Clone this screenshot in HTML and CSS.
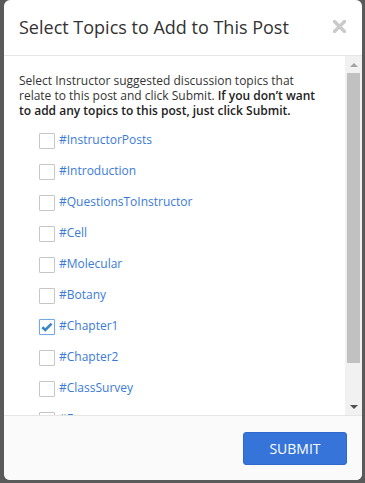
FILE: index.html
```html
<!DOCTYPE html>
<html>
<head>
<meta charset="utf-8">
<link rel="stylesheet" href="styles.css">
</head>
<body>
<div class="modal">
  <div class="modal-header">
    <h4 class="modal-title">Select Topics to Add to This Post</h4>
    <span class="close" aria-label="Close">
      <svg width="13" height="13" viewBox="0 0 13 13"><path d="M1.5 1.5 L11.5 11.5 M11.5 1.5 L1.5 11.5" stroke="#cacaca" stroke-width="3.4" stroke-linecap="square"/></svg>
    </span>
  </div>
  <div class="modal-body">
    <div class="content">
      <p class="intro">Select Instructor suggested discussion topics that<br>relate to this post and click Submit. <b>If you don’t want<br>to add any topics to this post, just click Submit.</b></p>
      <div class="topic"><span class="cb"></span><span class="label">#InstructorPosts</span></div>
      <div class="topic"><span class="cb"></span><span class="label">#Introduction</span></div>
      <div class="topic"><span class="cb"></span><span class="label">#QuestionsToInstructor</span></div>
      <div class="topic"><span class="cb"></span><span class="label">#Cell</span></div>
      <div class="topic"><span class="cb"></span><span class="label">#Molecular</span></div>
      <div class="topic"><span class="cb"></span><span class="label">#Botany</span></div>
      <div class="topic"><span class="cb checked"><svg width="14" height="14" viewBox="0 0 14 14"><path d="M2.3 7.2 L5.3 10 L11.6 3.6" fill="none" stroke="#3a87c8" stroke-width="2.6" stroke-linejoin="miter"/></svg></span><span class="label">#Chapter1</span></div>
      <div class="topic"><span class="cb"></span><span class="label">#Chapter2</span></div>
      <div class="topic"><span class="cb"></span><span class="label">#ClassSurvey</span></div>
      <div class="topic"><span class="cb"></span><span class="label">#Exam</span></div>
      <div class="topic"><span class="cb"></span><span class="label">#Final</span></div>
    </div>
    <div class="scrollbar">
      <div class="sb-btn"><span class="arrow-up"></span></div>
      <div class="sb-track"><div class="sb-thumb"></div></div>
      <div class="sb-btn"><span class="arrow-down"></span></div>
    </div>
  </div>
  <div class="modal-footer">
    <button class="btn-submit">SUBMIT</button>
  </div>
</div>
</body>
</html>
```
FILE: styles.css
```css
html, body {
  margin: 0;
  padding: 0;
}
body {
  width: 365px;
  height: 483px;
  overflow: hidden;
  background: #5a5a5a;
  font-family: "Open Sans", "Liberation Sans", sans-serif;
  color: #333;
}
.modal {
  margin-left: 4px;
  width: 358px;
  height: 480px;
  background: #fff;
  border-radius: 6px;
  display: flex;
  flex-direction: column;
  overflow: hidden;
}
.modal-header {
  height: 53px;
  flex: none;
  border-bottom: 1px solid #e5e5e5;
  display: flex;
  align-items: center;
  justify-content: space-between;
  padding: 0 16px 2px 15px;
  box-sizing: content-box;
}
.modal-title {
  margin: 0;
  font-size: 18px;
  font-weight: 400;
  line-height: 22px;
  color: #333;
}
.close {
  display: flex;
  width: 13px;
  height: 13px;
}
.modal-body {
  height: 359px;
  flex: none;
  display: flex;
}
.content {
  flex: 1;
  overflow: hidden;
  padding: 17px 0 0 15px;
}
.intro {
  margin: 0 0 13.5px;
  font-size: 12px;
  line-height: 15px;
  color: #333;
}
.intro b {
  font-weight: 600;
  color: #222;
}
.topic {
  display: flex;
  align-items: flex-start;
  height: 31px;
  padding-left: 20px;
}
.cb {
  width: 16px;
  height: 16px;
  box-sizing: border-box;
  border: 1px solid #c6c6c6;
  border-radius: 1px;
  margin-top: 1.5px;
  margin-right: 4px;
  background: #fff;
  display: flex;
  align-items: center;
  justify-content: center;
  flex: none;
}
.cb.checked {
  border: 1.5px solid #74a9e6;
  box-shadow: 0 0 1px #9cc3ef;
}
.label {
  font-size: 12px;
  line-height: 15px;
  color: #3a7bd8;
}
.scrollbar {
  width: 17px;
  flex: none;
  background: #f1f1f1;
  display: flex;
  flex-direction: column;
}
.sb-btn {
  height: 17px;
  display: flex;
  align-items: center;
  justify-content: center;
  flex: none;
}
.arrow-up {
  width: 0;
  height: 0;
  border-left: 4px solid transparent;
  border-right: 4px solid transparent;
  border-bottom: 4px solid #a3a3a3;
}
.arrow-down {
  width: 0;
  height: 0;
  border-left: 4px solid transparent;
  border-right: 4px solid transparent;
  border-top: 4px solid #505050;
}
.sb-track {
  flex: 1;
  display: flex;
  flex-direction: column;
  padding: 0 2px;
}
.sb-thumb {
  height: 290px;
  background: #c1c1c1;
}
.modal-footer {
  flex: 1;
  border-top: 1px solid #e5e5e5;
  background: #fafafa;
  display: flex;
  justify-content: flex-end;
  align-items: center;
  padding-right: 15px;
}
.btn-submit {
  width: 104px;
  height: 33px;
  border: 1px solid #2f6acb;
  border-radius: 3px;
  background: #3674d9;
  color: #fff;
  font-family: "Open Sans", "Liberation Sans", sans-serif;
  font-size: 14px;
  line-height: 20px;
  padding: 0;
  margin-top: 1px;
}
```
